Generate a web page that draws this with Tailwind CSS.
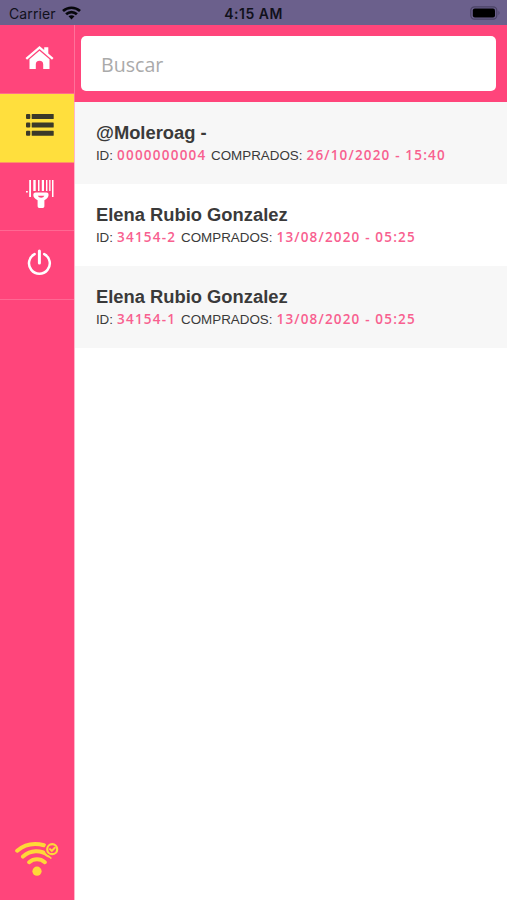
<!DOCTYPE html>
<html lang="es">
<head>
<meta charset="utf-8">
<title>Buscar</title>
<script src="https://cdn.jsdelivr.net/npm/@tailwindcss/browser@4"></script>
</head>
<body class="bg-white">
<div class="flex h-[900px] w-[507px] flex-col overflow-hidden bg-white font-['Liberation_Sans',sans-serif] text-[#3a3a3a]">
  <header class="grid h-[25px] shrink-0 grid-cols-3 items-center bg-[#6b608c] pt-[2px] font-['Inter',sans-serif] text-[14px] text-[#11111b]">
    <div class="flex items-center gap-[6px] pl-[9px]">
      <span class="text-[14px] tracking-[0.1px]">Carrier</span>
      <svg class="relative -top-px h-[14px] w-[19px]" viewBox="0 0 19 14" fill="none" stroke="#07070c" stroke-width="2.7"><path d="M1 5.1C5.8.6 13.2.6 18 5.1M4.1 8.3c3.1-2.9 7.7-2.9 10.8 0"/><path d="M6.5 10.3c1.7-1.5 4.3-1.5 6 0l-3 3.2z" fill="#07070c" stroke="none"/></svg>
    </div>
    <span class="text-center font-semibold tracking-[0.5px]">4:15 AM</span>
    <div class="flex justify-end pr-[6px]">
      <svg class="relative -top-px h-[14px] w-[31px]" viewBox="0 0 31 14"><rect x=".8" y=".8" width="26" height="12.4" rx="3.6" fill="none" stroke="#4b4366" stroke-width="1.2"/><rect x="2.8" y="2.5" width="22.2" height="9" rx="2" fill="#000"/><path d="M28.5 4.8q2 2.2 0 4.4z" fill="#4b4366"/></svg>
    </div>
  </header>
  <div class="flex min-h-0 flex-1">
    <nav class="flex w-[74px] shrink-0 flex-col bg-[#ff457b]">
      <a class="flex h-[69px] justify-center border-b border-[#ff6d8c] pt-[20px] pl-[5px]">
        <svg class="h-[25px] w-[30px]" viewBox="0.5 0 30 25" fill="#fff"><path d="M1 13.1 15 1l4.7 4V2.3h4.1v6.3L29 13.1l-1.5 1.6L15 4 2.5 14.7z"/><path d="M5 14.2 15 5.8l10 8.4V24h-6.3v-4.5a3.7 3.7 0 0 0-7.4 0V24H5z"/></svg>
      </a>
      <a class="flex h-[69px] justify-center border-b border-[#ff9365] bg-[#ffdf3d] pt-[20px] pl-[5px]">
        <svg class="h-[22px] w-[28px]" viewBox="0.3 0 28 22" fill="#3b3929"><rect x=".3" y="0" width="4.3" height="5" rx="1"/><rect x="6" width="22" height="5" rx=".6"/><rect x=".3" y="8.5" width="4.3" height="5" rx="1"/><rect x="6" y="8.5" width="22" height="5" rx=".6"/><rect x=".3" y="16.8" width="4.3" height="5" rx="1"/><rect x="6" y="16.8" width="22" height="5" rx=".6"/></svg>
      </a>
      <a class="flex h-[68px] justify-center border-b border-[#ff6893] pt-[16px] pl-[5px]">
        <svg class="h-[30px] w-[28px]" viewBox="0 0 28 30" fill="#fff"><path d="M3.2 1H5v17H3.2zM7.3 1h2.4v11H7.3zM12 1h1.5v11H12zM15.8 1h2.2v11h-2.2zM20 1h1.4v11H20zM23.2 1h1.3v11h-1.3zM26 1h1.5v17H26zM0 12h1.8v1.6H0z"/><path fill-rule="evenodd" d="M9.6 13.5h10.8q2.3 0 2.2 2.2 0 3.3-4.2 5.5v6q0 1.7-1.6 1.7h-3.6q-1.6 0-1.6-1.7v-6c-3-1.4-4.3-3.2-4.3-5.5Q7.3 13.5 9.6 13.5zm2.2 3.2q.8 2.1 3.3 2.1t3.3-2.1z"/></svg>
      </a>
      <a class="flex h-[69px] justify-center border-b border-[#ff6893] pt-[17px] pl-[5px]">
        <svg class="h-[28px] w-[26px]" viewBox="0.6 0 26 28" fill="none" stroke="#fff" stroke-linecap="round"><path stroke-width="2.5" d="M8.2 6.1a10.4 10.4 0 1 0 9.6 0"/><path stroke-width="3" d="M13 3v12"/></svg>
      </a>
      <svg class="mt-auto mb-[22px] ml-[14px] h-[38px] w-[46px]" viewBox="0 0 46 38" fill="none" stroke="#ffd838" stroke-linecap="round"><path stroke-width="4" d="M3.2 10.7C10.5 4.4 20.5 2.7 30 5.2M9 16.6c7.7-6.6 17.5-7 25.3-1.3M15.2 22.2c4.6-3.9 11-3.9 15.6 0"/><circle cx="23" cy="31.2" r="4.6" fill="#ffd838" stroke="none"/><circle cx="38.2" cy="9.2" r="7.6" fill="#ff457b" stroke="none"/><circle cx="38.2" cy="9.2" r="5" stroke-width="2.2"/><path stroke-width="2" d="m36 9.1 1.8 1.8 3-3.2"/><path stroke-width="1.7" d="M31.5 14.5c2 .8 4 2 5.3 3.5"/></svg>
    </nav>
    <main class="flex-1 border-l border-[#ff86a8]/60">
      <div class="-ml-px h-[77px] border-l border-[#ff719a] bg-[#ff457b] py-[11px] pr-[11px] pl-[6px]">
        <input class="h-[55px] w-full rounded-[5px] bg-white px-[20px] pt-[2px] font-['Open_Sans',sans-serif] text-[19.6px] outline-none placeholder:text-[#aaa]" placeholder="Buscar">
      </div>
      <ul>
        <li class="h-[82px] bg-[#f7f7f7] pt-[20px] pl-[21px]">
          <h2 class="text-[18.35px] leading-[22px] font-bold">@Moleroag -</h2>
          <p class="flex h-[22px] items-baseline text-[13.4px] leading-[22px] whitespace-nowrap"><span class="w-[21px] tracking-[-0.1px]">ID:</span><span class="w-[94px] font-['Open_Sans',sans-serif] text-[13.5px] font-semibold tracking-[1.23px] text-[#f8608f]">0000000004</span><span class="w-[95.5px]">COMPRADOS:</span><span class="font-['Open_Sans',sans-serif] text-[13.5px] font-semibold tracking-[1.17px] text-[#f8608f]">26/10/2020 - 15:40</span></p>
        </li>
        <li class="h-[82px] bg-white pt-[20px] pl-[21px]">
          <h2 class="text-[18.35px] leading-[22px] font-bold">Elena Rubio Gonzalez</h2>
          <p class="flex h-[22px] items-baseline text-[13.4px] leading-[22px] whitespace-nowrap"><span class="w-[21px] tracking-[-0.1px]">ID:</span><span class="w-[64px] font-['Open_Sans',sans-serif] text-[13.5px] font-semibold tracking-[1.23px] text-[#f8608f]">34154-2</span><span class="w-[95.5px]">COMPRADOS:</span><span class="font-['Open_Sans',sans-serif] text-[13.5px] font-semibold tracking-[1.17px] text-[#f8608f]">13/08/2020 - 05:25</span></p>
        </li>
        <li class="h-[82px] bg-[#f7f7f7] pt-[20px] pl-[21px]">
          <h2 class="text-[18.35px] leading-[22px] font-bold">Elena Rubio Gonzalez</h2>
          <p class="flex h-[22px] items-baseline text-[13.4px] leading-[22px] whitespace-nowrap"><span class="w-[21px] tracking-[-0.1px]">ID:</span><span class="w-[64px] font-['Open_Sans',sans-serif] text-[13.5px] font-semibold tracking-[1.23px] text-[#f8608f]">34154-1</span><span class="w-[95.5px]">COMPRADOS:</span><span class="font-['Open_Sans',sans-serif] text-[13.5px] font-semibold tracking-[1.17px] text-[#f8608f]">13/08/2020 - 05:25</span></p>
        </li>
      </ul>
    </main>
  </div>
</div>
</body>
</html>
